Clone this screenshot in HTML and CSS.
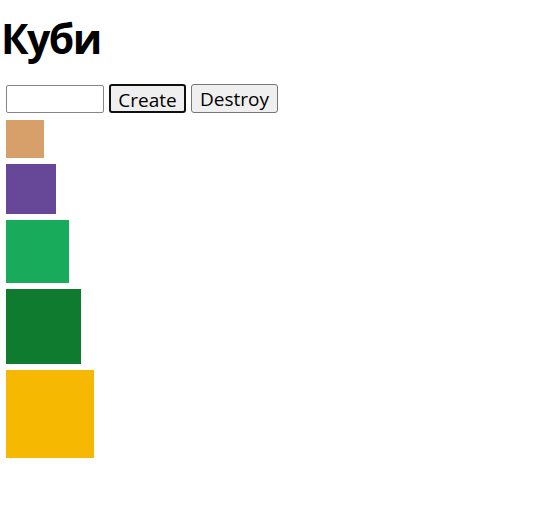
FILE: index.html
```html
<!DOCTYPE html>
<html lang="uk">
<head>
<meta charset="utf-8">
<title>Куби</title>
<link rel="stylesheet" href="styles.css">
</head>
<body>
<h1 class="title">Куби</h1>
<div class="controls">
  <input class="amount" type="number">
  <button class="btn btn-create" type="button">Create</button>
  <button class="btn btn-destroy" type="button">Destroy</button>
</div>
<div class="boxes">
  <div class="box" style="width:37.5px;height:37.5px;background:#d7a06a"></div>
  <div class="box" style="width:50px;height:50px;background:#674797"></div>
  <div class="box" style="width:62.5px;height:62.5px;background:#19ab5c"></div>
  <div class="box" style="width:75px;height:75px;background:#0f7b2f"></div>
  <div class="box" style="width:87.5px;height:87.5px;background:#f6b800"></div>
</div>
</body>
</html>
```
FILE: styles.css
```css
html, body {
  margin: 0;
  padding: 0;
  background: #fff;
  font-family: "Open Sans", "Noto Sans", sans-serif;
  color: #000;
}
.title {
  margin: 0;
  padding: 10px 0 0 1px;
  font-size: 41px;
  font-weight: 700;
  line-height: 56px;
  letter-spacing: -1.5px;
}
.controls {
  margin: 18px 0 0 6px;
  display: flex;
  align-items: center;
  gap: 5px;
  height: 29px;
}
.amount {
  box-sizing: border-box;
  width: 98px;
  height: 28px;
  margin: 0;
  border: 1px solid #858585;
  border-radius: 2px;
  padding: 0 4px;
  font-size: 20px;
}
.btn {
  box-sizing: border-box;
  height: 29px;
  margin: 0;
  padding: 2px 0 0;
  background: #efefef;
  border: 1px solid #767676;
  border-radius: 3px;
  font-family: "Open Sans", "Noto Sans", sans-serif;
  font-size: 19px;
  line-height: 25px;
  color: #000;
}
.btn-create {
  border: 2px solid #101010;
  width: 77px;
}
.btn-destroy {
  width: 87px;
}
.boxes {
  margin: 7px 0 0 6px;
  display: flex;
  flex-direction: column;
  align-items: flex-start;
  gap: 6.25px;
}
.box {
  flex: none;
}
```
